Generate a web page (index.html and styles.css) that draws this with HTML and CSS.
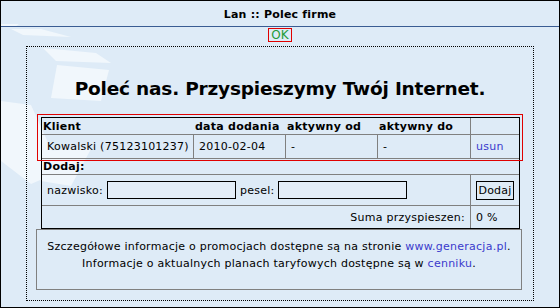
FILE: index.html
```html
<!DOCTYPE html>
<html lang="pl">
<head>
<meta charset="utf-8">
<title>Lan :: Polec firme</title>
<link rel="stylesheet" href="styles.css">
</head>
<body>
<div class="page">
  <div class="titlebar">Lan :: Polec firme</div>
  <div class="okrow"><a class="ok" href="#">OK</a></div>
  <div class="frame">
    <h1 class="headline">Poleć nas. Przyspieszymy Twój Internet.</h1>
    <div class="grid">
      <div class="highlight"></div>
      <div class="row head">
        <div class="c c1">Klient</div>
        <div class="c c2">data dodania</div>
        <div class="c c3">aktywny od</div>
        <div class="c c4">aktywny do</div>
        <div class="c c5 sep"></div>
      </div>
      <div class="row data">
        <div class="c c1">Kowalski (75123101237)</div>
        <div class="c c2 sep">2010-02-04</div>
        <div class="c c3 sep">-</div>
        <div class="c c4 sep">-</div>
        <div class="c c5 sep"><a class="link" href="#">usun</a></div>
      </div>
      <div class="row add">
        <div class="c full">Dodaj:</div>
      </div>
      <div class="row form">
        <div class="c wide">
          <label class="lbl">nazwisko:</label>
          <input class="field" type="text">
          <label class="lbl">pesel:</label>
          <input class="field" type="text">
        </div>
        <div class="c c5 sep"><button class="btn" type="button">Dodaj</button></div>
      </div>
      <div class="row sum">
        <div class="c wide right">Suma przyspieszen:</div>
        <div class="c c5 sep">0 %</div>
      </div>
    </div>
    <div class="info">
      <p class="line">Szczegółowe informacje o promocjach dostępne są na stronie <a class="link" href="#">www.generacja.pl</a>.</p>
      <p class="line">Informacje o aktualnych planach taryfowych dostępne są w <a class="link" href="#">cenniku</a>.</p>
    </div>
  </div>
</div>
</body>
</html>
```

FILE: styles.css
```css
* { box-sizing: border-box; }
html, body { margin: 0; padding: 0; }
body {
  font-family: "DejaVu Sans", Verdana, sans-serif;
  font-size: 11px;
  letter-spacing: 0.25px;
  color: #000;
}
.page {
  width: 560px;
  height: 308px;
  border: 1px solid #000;
  background-color: #deebf7;
  background-image: url("data:image/svg+xml;utf8,<svg xmlns='http://www.w3.org/2000/svg' width='560' height='308'><g fill='%23f1f7fc'><polygon points='0,23 18,23 14,26 0,26'/><polygon points='10,28 40,28 70,36 22,34'/><polygon points='42,47 95,52 110,62 55,60'/><polygon points='56,64 108,69 100,100 50,97'/><polygon points='0,100 30,104 60,170 30,183 0,160'/><polygon points='30,150 90,148 70,185 40,180'/></g></svg>");
  background-repeat: no-repeat;
  display: flex;
  flex-direction: column;
}
.titlebar {
  height: 26px;
  border-bottom: 1px solid #3a5c93;
  text-align: center;
  font-weight: bold;
  font-size: 11px;
  letter-spacing: 0.2px;
  line-height: 16px;
  padding-top: 6px;
}
.okrow {
  height: 19px;
  text-align: center;
  padding-top: 1px;
}
.ok {
  display: inline-block;
  border: 1px solid #e00000;
  color: #239b3a;
  text-decoration: none;
  font-size: 12px;
  letter-spacing: 0;
  line-height: 12px;
  height: 14px;
  padding: 0 2px;
}
.frame {
  margin: 0 25px 0 25px;
  height: 255px;
  border: 1px dotted #000;
  display: flex;
  flex-direction: column;
}
.headline {
  margin: 0;
  font-size: 18.5px;
  letter-spacing: -0.2px;
  font-weight: bold;
  text-align: center;
  line-height: 24px;
  padding-top: 30px;
  height: 70px;
}
.grid {
  position: relative;
  margin-left: 14px;
  width: 479px;
  border: 1px solid #000;
}
.highlight {
  position: absolute;
  left: -5px;
  top: -4px;
  width: 486px;
  height: 47px;
  border: 1px solid #e00000;
  pointer-events: none;
}
.row {
  display: flex;
  border-top: 1px solid #808080;
}
.row.head { border-top: 0; height: 16px; }
.row.data { height: 24px; }
.row.add { height: 16px; }
.row.form { height: 31px; }
.row.sum { height: 23px; }
.c {
  border-left: 1px solid transparent;
  display: flex;
  align-items: center;
  white-space: nowrap;
}
.c1 { width: 151px; border-left: 0; }
.c2 { width: 92px; }
.c3 { width: 92px; }
.c4 { width: 93px; }
.c5 { width: 49px; }
.sep { border-left-color: #808080; }
.head .c { font-weight: bold; padding-left: 1px; }
.data .c { padding-left: 5px; }
.full { width: 100%; border-left: 0; font-weight: bold; padding-left: 1px; }
.wide { width: 428px; border-left: 0; padding-left: 5px; }
.right { justify-content: flex-end; padding-right: 5px; }
.sum .c5, .form .c5 { padding-left: 5px; }
.lbl { margin-right: 4px; }
.field {
  width: 129px;
  height: 18px;
  border: 1px solid #000;
  background: #e4eef9;
  margin: 0 4px 0 0;
  padding: 0;
}
.btn {
  width: 38px;
  height: 19px;
  border: 1px solid #000;
  background: #dfebf6;
  font-family: "DejaVu Sans", Verdana, sans-serif;
  font-size: 11px;
  letter-spacing: 0.2px;
  padding: 0;
  margin: 0;
  color: #000;
}
.link { color: #3a3acc; text-decoration: none; }
.info {
  margin-left: 9px;
  width: 486px;
  height: 61px;
  border: 1px solid #808080;
  text-align: center;
  padding-top: 10px;
}
.line {
  margin: 0 0 3px 0;
  line-height: 14px;
}
```
